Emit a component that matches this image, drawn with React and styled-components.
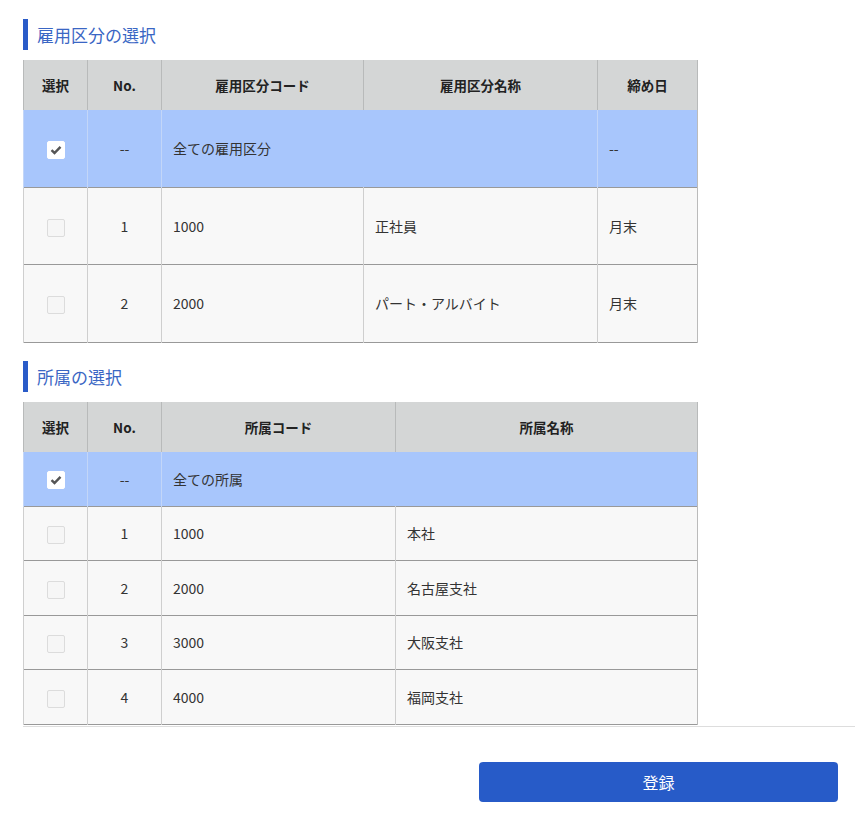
import React from 'react';
import styled, { createGlobalStyle } from 'styled-components';

const GlobalStyle = createGlobalStyle`
  html, body {
    margin: 0;
    padding: 0;
    background: #fff;
  }
  body {
    font-family: 'Noto Sans CJK JP', 'Noto Sans', sans-serif;
    color: #333;
  }
`;

const Page = styled.div`
  padding: 19px 0 0 23px;
  width: 832px;
`;

const Section = styled.section`
  margin-bottom: 18px;
`;

const Title = styled.h2`
  display: flex;
  align-items: center;
  height: 31px;
  margin: 0 0 10px;
  padding-left: 9px;
  border-left: 5px solid #2a5bc8;
  font-size: 17px;
  font-weight: normal;
  color: #3a66c4;
`;

const Table = styled.table`
  width: 674px;
  border-collapse: collapse;
  table-layout: fixed;
  font-size: 14px;
`;

const Th = styled.th`
  height: 50px;
  padding: 0;
  background: #d4d6d6;
  border-left: 1px solid #b8baba;
  border-right: 1px solid #b8baba;
  font-size: 13.5px;
  font-weight: bold;
  color: #222;
  text-align: center;
`;

const Tr = styled.tr`
  height: ${({ $h }) => $h}px;
  background: ${({ $all }) => ($all ? '#a8c6fc' : '#f8f8f8')};
  border-bottom: 1px solid #999;
`;

const Td = styled.td`
  padding: 0 11px;
  border-left: 1px solid ${({ $all }) => ($all ? '#c3d6f8' : '#cfcfcf')};
  border-right: 1px solid ${({ $all }) => ($all ? '#c3d6f8' : '#cfcfcf')};
  text-align: ${({ $center }) => ($center ? 'center' : 'left')};
  color: #333;
  &:last-child {
    border-right-color: #bbb;
  }
`;

const Box = styled.span`
  display: inline-flex;
  align-items: center;
  justify-content: center;
  width: 16px;
  height: 16px;
  vertical-align: middle;
  border: 1px solid ${({ $checked }) => ($checked ? '#fff' : '#dcdcdc')};
  border-radius: 2px;
  background: ${({ $checked }) => ($checked ? '#fff' : '#f6f6f6')};
`;

const Footer = styled.div`
  margin-top: -17px;
  border-top: 1px solid #ddd;
  display: flex;
  justify-content: flex-end;
  padding: 35px 17px 0 0;
`;

const SubmitButton = styled.button`
  width: 359px;
  height: 40px;
  border: 0;
  border-radius: 4px;
  background: #275bc8;
  color: #fff;
  font-family: inherit;
  font-size: 16px;
  cursor: pointer;
`;

function CheckBox({ checked }) {
  return (
    <Box $checked={checked}>
      {checked && (
        <svg width='12' height='10' viewBox='0 0 12 10'>
          <path d='M1.5 5.2 L4.5 8 L10.5 1.8' fill='none' stroke='#555' strokeWidth='2.4' />
        </svg>
      )}
    </Box>
  );
}

const employmentRows = [
  { no: 1, code: '1000', name: '正社員', close: '月末' },
  { no: 2, code: '2000', name: 'パート・アルバイト', close: '月末' },
];

const branchRows = [
  { no: 1, code: '1000', name: '本社' },
  { no: 2, code: '2000', name: '名古屋支社' },
  { no: 3, code: '3000', name: '大阪支社' },
  { no: 4, code: '4000', name: '福岡支社' },
];

export default function App() {
  return (
    <>
      <GlobalStyle />
      <Page>
        <Section>
          <Title>雇用区分の選択</Title>
          <Table>
            <colgroup>
              <col style={{ width: 64 }} />
              <col style={{ width: 74 }} />
              <col style={{ width: 202 }} />
              <col style={{ width: 234 }} />
              <col style={{ width: 100 }} />
            </colgroup>
            <thead>
              <tr>
                <Th>選択</Th>
                <Th>No.</Th>
                <Th>雇用区分コード</Th>
                <Th>雇用区分名称</Th>
                <Th>締め日</Th>
              </tr>
            </thead>
            <tbody>
              <Tr $all $h={77.4}>
                <Td $all $center><CheckBox checked /></Td>
                <Td $all $center>--</Td>
                <Td $all colSpan={2}>全ての雇用区分</Td>
                <Td $all>--</Td>
              </Tr>
              {employmentRows.map((r) => (
                <Tr key={r.no} $h={77.4}>
                  <Td $center><CheckBox /></Td>
                  <Td $center>{r.no}</Td>
                  <Td>{r.code}</Td>
                  <Td>{r.name}</Td>
                  <Td>{r.close}</Td>
                </Tr>
              ))}
            </tbody>
          </Table>
        </Section>

        <Section>
          <Title>所属の選択</Title>
          <Table>
            <colgroup>
              <col style={{ width: 64 }} />
              <col style={{ width: 74 }} />
              <col style={{ width: 234 }} />
              <col style={{ width: 302 }} />
            </colgroup>
            <thead>
              <tr>
                <Th>選択</Th>
                <Th>No.</Th>
                <Th>所属コード</Th>
                <Th>所属名称</Th>
              </tr>
            </thead>
            <tbody>
              <Tr $all $h={54.5}>
                <Td $all $center><CheckBox checked /></Td>
                <Td $all $center>--</Td>
                <Td $all colSpan={2}>全ての所属</Td>
              </Tr>
              {branchRows.map((r) => (
                <Tr key={r.no} $h={54.5}>
                  <Td $center><CheckBox /></Td>
                  <Td $center>{r.no}</Td>
                  <Td>{r.code}</Td>
                  <Td>{r.name}</Td>
                </Tr>
              ))}
            </tbody>
          </Table>
        </Section>

        <Footer>
          <SubmitButton type='button'>登録</SubmitButton>
        </Footer>
      </Page>
    </>
  );
}
